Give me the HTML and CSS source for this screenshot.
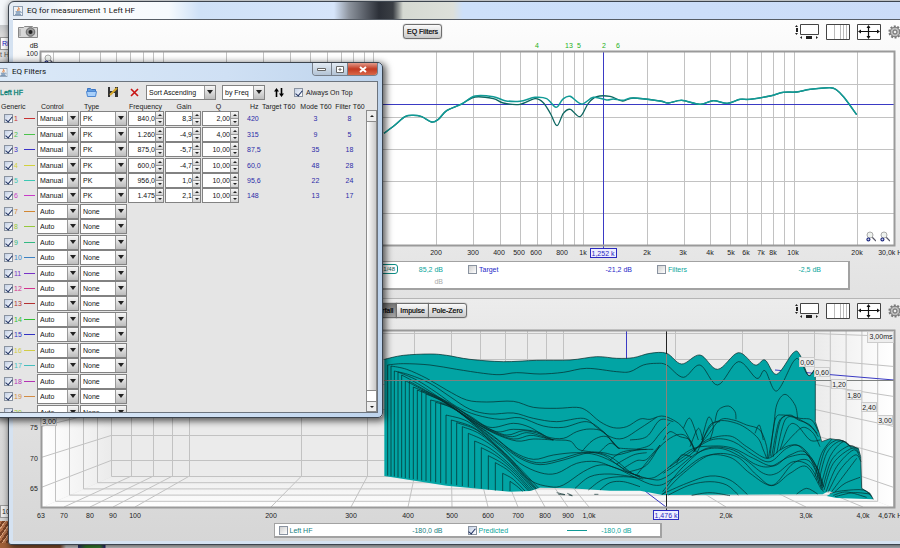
FILE: index.html
```html
<!DOCTYPE html>
<html lang="en">

<head>
    <title>EQ for measurement 1 Left HF</title>
    <meta charset="utf-8">
    <meta name="viewport" content="width=device-width, initial-scale=1.0">
    <link rel="stylesheet" href="styles.css">
</head>

<body>
    <svg class="symbols" aria-hidden="true">
        <symbol id="java" viewBox="0 0 10 10">
            <rect x=".5" y=".5" width="9" height="9" fill="#eef2f6" stroke="#8fa0b4" />
            <path d="M5 1.2C7 2.6 3.4 3.4 5 5M6.4 2.4C5.4 3.4 6.6 3.8 5.8 4.8" fill="none" stroke="#e0762b" />
            <path d="M2.5 5.8h5M3 7h4M2 8.3h6M7.6 5.6q1.4.4 0 1.4" fill="none" stroke="#4a7099" stroke-width=".8" />
        </symbol>
        <symbol id="scrollbars" viewBox="0 0 24 16">
            <path d="M5.5.5h18v10h-18z" fill="#fff" stroke="#444" />
            <path d="M0 3l1.5-2L3 3zM0 9l1.5 2L3 9zM1 4h2v4H1zM7 12v3l-2-1.5zM21 12v3l2-1.5zM11 12h6v3h-6z" fill="#222" />
        </symbol>
        <symbol id="columns" viewBox="0 0 24 16">
            <path d="M.5.5h23v15H.5z" fill="#fff" stroke="#444" />
            <path d="M8.5 1v14M14.5 1v14M17.5 1v14M20.5 1v14" stroke="#bbb" />
        </symbol>
        <symbol id="limits" viewBox="0 0 24 16">
            <path d="M.5.5h23v15H.5z" fill="#fff" stroke="#444" />
            <path d="M2 7.5h20M11.5 2v12" stroke="#111" stroke-width="1.2" />
            <path d="M1 7.5l3-2v4zM23 7.5l-3-2v4zM11.5 1l-2 3h4zM11.5 15l-2-3h4z" fill="#111" />
        </symbol>
        <symbol id="gear" viewBox="0 0 14 14">
            <circle cx="7" cy="7" r="5.6" fill="none" stroke="#777" stroke-width="2" stroke-dasharray="2 1.5" />
            <circle cx="7" cy="7" r="4.8" fill="#bbb" stroke="#777" />
            <circle cx="7" cy="7" r="2" fill="#eee" stroke="#666" />
        </symbol>
        <symbol id="lens" viewBox="0 0 10 11">
            <path d="M6 6l4 4" stroke="#556" stroke-width="1.2" />
            <circle cx="4" cy="4" r="3" fill="#eef2ee" stroke="#aaa" />
            <circle cx="2.4" cy="8.4" r="2" fill="#1b2780" />
            <path d="M1.4 8.4h2M2.4 7.4v2" stroke="#fff" stroke-width=".6" />
        </symbol>
    </svg>

    <div class="desktop">
        <span class="behind">Rig</span>
        <span class="behind lower">t H</span>
        <span class="behind bottom">10</span>
    </div>

    <main class="window eq">
        <header class="titlebar">
            <svg width="10" height="10"><use href="#java" /></svg>
            <h1>EQ for measurement 1 Left HF</h1>
        </header>

        <section class="panel">
            <div class="toolbar">
                <button class="camera" aria-label="Capture">
                    <svg width="20" height="13" viewBox="0 0 20 13">
                        <path d="M.5 2.5h5l1-1h8l1 1h4v10H.5z" fill="#d8d8d8" stroke="#888" />
                        <circle cx="12.5" cy="7" r="4.3" fill="#999" stroke="#666" />
                        <circle cx="12.5" cy="7" r="2" fill="#222" />
                        <path d="M2 4v7" stroke="#999" />
                    </svg>
                </button>
                <button class="push">EQ Filters</button>
                <span class="tools">
                    <button aria-label="Scrollbars"><svg width="24" height="16"><use href="#scrollbars" /></svg></button>
                    <button aria-label="Frequency axis"><svg width="24" height="16"><use href="#columns" /></svg></button>
                    <button aria-label="Limits"><svg width="24" height="16"><use href="#limits" /></svg></button>
                    <button aria-label="Controls"><svg width="14" height="14"><use href="#gear" /></svg></button>
                </span>
            </div>
            <svg class="chart" id="spl" viewBox="13 43 909 216">
                <rect x="40" y="51" width="855" height="195" fill="#fff" />
                <g class="grid"></g>
                <path class="cursor" d="M41 104.5H894M603.5 51V249" />
                <g class="curves"></g>
                <rect class="frame" x="40.5" y="51.5" width="854" height="194" />
                <g class="axis"></g>
                <rect class="tag" x="590.5" y="248.5" width="26" height="9" />
                <text class="tagtext" x="603" y="256">1,252 k</text>
                <use href="#lens" x="44" y="54" width="10" height="11" />
                <use href="#lens" x="866" y="231" width="10" height="11" />
                <use href="#lens" x="880" y="231" width="10" height="11" />
            </svg>
            <div class="legend wide">
                <label class="item"><input type="checkbox" checked>SPL</label>
                <div class="item green"><label><input type="checkbox" checked>Left HF</label><span class="smoothing">1/48</span><span class="value">85,2 dB</span></div>
                <div class="item blue"><label><input type="checkbox">Target</label><span class="value">-21,2 dB</span></div>
                <div class="item green"><label><input type="checkbox">Filters</label><span class="value">-2,5 dB</span></div>
                <div class="item unit"><span class="value">dB</span></div>
            </div>
        </section>

        <section class="panel lowerpanel">
            <div class="toolbar">
                <span class="tabs">
                    <button class="push selected">Waterfall</button>
                    <button class="push">Impulse</button>
                    <button class="push">Pole-Zero</button>
                </span>
                <span class="tools">
                    <button aria-label="Scrollbars"><svg width="24" height="16"><use href="#scrollbars" /></svg></button>
                    <button aria-label="Frequency axis"><svg width="24" height="16"><use href="#columns" /></svg></button>
                    <button aria-label="Limits"><svg width="24" height="16"><use href="#limits" /></svg></button>
                    <button aria-label="Controls"><svg width="14" height="14"><use href="#gear" /></svg></button>
                </span>
            </div>
            <svg class="chart" id="waterfall" viewBox="13 322 909 199">
                <defs>
                    <linearGradient id="leftwall"><stop offset="0" stop-color="#fff" /><stop offset="1" stop-color="#ebebeb" /></linearGradient>
                    <linearGradient id="rightwall"><stop offset="0" stop-color="#ebebeb" /><stop offset="1" stop-color="#fff" /></linearGradient>
                    <linearGradient id="floor" x2="0" y2="1"><stop offset="0" stop-color="#ededed" /><stop offset="1" stop-color="#fff" /></linearGradient>
                </defs>
                <path d="M111 330H815V477H111z" fill="#ebebeb" />
                <path d="M41 330H111V477L41 508z" fill="url(#leftwall)" />
                <path d="M894 330H815V477L894 508z" fill="url(#rightwall)" />
                <path d="M111 477H815L894 508H41z" fill="url(#floor)" />
                <g class="grid"></g>
                <path class="cursor" d="M626.5 331V370M645 491L666 507M775 370L894 380" />
                <g class="slices"></g>
                <path class="crosshair" d="M384 380.5H894" />
                <path d="M666.5 331V510" stroke="#222" />
                <path d="M666.5 354V494" stroke="#8b8178" />
                <rect class="frame" x="41.5" y="330.5" width="853" height="177" />
                <g class="axis"></g>
                <rect class="tag" x="653.5" y="510.5" width="25" height="9" />
                <text class="tagtext" x="666" y="518">1,476 k</text>
            </svg>
            <div class="legend narrow">
                <div class="item teal"><label><input type="checkbox">Left HF</label><span class="value">-180,0 dB</span></div>
                <div class="item green"><label><input type="checkbox" checked>Predicted</label><span class="line"></span><span class="value">-180,0 dB</span></div>
            </div>
        </section>
    </main>

    <section class="window filters">
        <header class="titlebar">
            <svg width="8" height="9" viewBox="2 0 8 10"><use href="#java" width="10" height="10" /></svg>
            <h2>EQ Filters</h2>
            <span class="winbuttons">
                <button aria-label="Minimize"><svg width="10" height="5"><path d="M.5 1.5h8v2h-8z" fill="#fff" stroke="#666" /></svg></button>
                <button aria-label="Maximize"><svg width="8" height="7"><path d="M.5 .5h7v6h-7zM3 3h2v1H3z" fill="#fff" stroke="#666" /></svg></button>
                <button class="close" aria-label="Close"><svg width="8" height="7"><path d="M1 1l6 5M7 1L1 6" stroke="#fff" stroke-width="2" /></svg></button>
            </span>
        </header>
        <div class="content">
            <div class="filterbar">
                <strong>Left HF</strong>
                <button aria-label="Open filters"><svg width="12" height="10" viewBox="0 0 12 10"><path d="M1.5 8V1.5h3l1 1h4V8z" fill="#5f9be0" stroke="#3c76c4" /><path d="M.5 4.5h10l-1 5h-8z" fill="#a9d0fa" stroke="#4d87d2" /></svg></button>
                <button aria-label="Save filters"><svg width="10" height="10" viewBox="0 0 10 10"><path d="M0 0h10v10H0z" fill="#333" /><path d="M2 0h5v4H2zM2 6h5v4H2z" fill="#ddd" /><path d="M2 8L9 1" stroke="#d6a92c" stroke-width="2" /></svg></button>
                <button aria-label="Delete filters"><svg width="9" height="9" viewBox="0 0 9 9"><path d="M1 1l7 7M8 1L1 8" stroke="#c81414" stroke-width="1.6" /></svg></button>
                <span class="combo sort"><select aria-label="Sort order"><option>Sort Ascending</option><option>Sort Descending</option></select></span>
                <span class="combo by"><select aria-label="Sort by"><option>by Freq</option><option>by Gain</option></select></span>
                <button aria-label="Sort"><svg width="10" height="9" viewBox="0 0 10 9"><path d="M2.5 2v7M7.5 0v7" stroke="#000" stroke-width="1.6" /><path d="M0 3.4L2.5 0 5 3.4zM5 5.6L7.5 9 10 5.6z" /></svg></button>
                <label><input type="checkbox" checked>Always On Top</label>
            </div>
            <div class="scrollpane">
                <table>
                    <thead>
                        <tr>
                            <th class="generic">Generic</th>
                            <th class="control">Control</th>
                            <th class="type">Type</th>
                            <th class="freq">Frequency</th>
                            <th class="gain mid">Gain</th>
                            <th class="q mid">Q</th>
                            <th class="hz">Hz</th>
                            <th class="target">Target T60</th>
                            <th class="mode mid">Mode T60</th>
                            <th class="filter mid">Filter T60</th>
                        </tr>
                    </thead>
                    <tbody id="rows"></tbody>
                </table>
                <div class="scrollbar">
                    <button class="up" aria-label="Scroll up"></button>
                    <span class="thumb"></span>
                    <button class="down" aria-label="Scroll down"></button>
                </div>
            </div>
        </div>
    </section>

    <template id="row">
        <tr>
            <td><label class="number"><input type="checkbox" checked><span class="nr"></span><i class="dash"></i></label></td>
            <td><span class="combo"><select class="c" aria-label="Control"><option>Manual</option><option>Auto</option></select></span></td>
            <td><span class="combo"><select class="t" aria-label="Type"><option>PK</option><option>None</option></select></span></td>
        </tr>
    </template>

    <script src="script.js"></script>
</body>

</html>
```

FILE: styles.css
```css
* {
    box-sizing: border-box;
}

body {
    margin: 0;
    height: 100vh;
    overflow: hidden;
    position: relative;
    background: #dcdcdc;
    font-family: "Liberation Sans", Arial, sans-serif;
    font-size: 7px;
    line-height: 9px;
    color: #222;
}

button,
input,
select {
    font: inherit;
    color: inherit;
    margin: 0;
    padding: 0;
}

button {
    background: none;
    border: 0;
    display: flex;
    align-items: center;
    justify-content: center;
}

h1,
h2 {
    margin: 0;
    font: 8px/12px Roboto, "Noto Sans", sans-serif;
    color: #111;
}

.symbols {
    position: absolute;
    width: 0;
    height: 0;
}

input[type=checkbox] {
    appearance: none;
    flex: none;
    width: 9px;
    height: 9px;
    border: 1px solid #8a93a0;
    background: linear-gradient(135deg, #cfcfcf, #fff);
    display: grid;
    place-items: center;
}

input[type=checkbox]:checked {
    background: linear-gradient(135deg, #c3d0e6, #fff);
}

input[type=checkbox]:checked::after {
    content: "";
    width: 3px;
    height: 6px;
    border: solid #1d2f60;
    border-width: 0 1px 1px 0;
    transform: rotate(40deg);
}

label {
    display: flex;
    align-items: center;
    gap: 2px;
}

/* what can be seen of the windows behind */
.desktop {
    position: absolute;
    inset: 0;
    background:
        linear-gradient(90deg, transparent 78px, #3a3a8a 78px, #3f9a35 86px, #4aa344 100px, #3a2f90 105px, transparent 106px) 0 100% / 100% 5px no-repeat,
        linear-gradient(90deg, #a06038 60px, #fff 66px, #e8f1fa) 0 100% / 100% 5px no-repeat,
        repeating-linear-gradient(125deg, #b4714a 0 2px, #7d4426 2px 4px, #d9a27c 4px 5px) 0 100% / 9px 27px no-repeat,
        linear-gradient(#f4f7fa 25px, #c6c9cc 25px, #d9d9d9 34px, #e2e2e2 60px, #d6d6d6);
}

.behind {
    position: absolute;
    left: 0;
    top: 37px;
    padding: 1px 0 1px 1px;
    background: #fff;
    border: 1px solid #999;
    border-right: 0;
    color: #1515c8;
}

.lower {
    top: 49px;
    padding-left: 0;
    border: 0;
    background: none;
    color: #555;
}

.bottom {
    top: 505px;
    background: #eee;
    color: #222;
}

.window {
    position: absolute;
    border: 1px solid #3c444e;
    box-shadow: 2px 2px 7px 1px rgba(0, 0, 0, .65);
}

.titlebar {
    display: flex;
    align-items: center;
}

.eq {
    left: 8px;
    right: -27px;
    top: 1px;
    bottom: 3px;
    border-radius: 6px 6px 3px 3px;
    padding: 0 4px 3px;
    background:
        linear-gradient(90deg, #e6edf5 30px, #fbfcfd 60px, #f6fafd 160px, #cfe1f7 190px, #d6e5fa 325px, #30343c 334px, #2c3038 386px, #bfc5c0 392px, #dde0da 446px, #cde0fa 452px, #cbdcf8) 0 0 / 100% 18px no-repeat,
        #d5e2f1;
    background:
        linear-gradient(90deg, #e6edf5 30px, #fbfcfd 60px, #f6fafd 160px, #cfe1f7 190px, #d6e5fa 325px, #8d949e 340px, #2c3038 370px, #3a3e44 384px, #d5d9d2 394px, #dde0da 444px, #cde0fa 454px, #cbdcf8) 0 0 / 100% 18px no-repeat,
        #d5e2f1;
}

.eq .titlebar {
    height: 17px;
    gap: 4px;
}

.panel {
    border-top: 1px solid #565d66;
    background: linear-gradient(#fdfdfd, #f7f7f7 20%, #e2e2e2);
    padding-bottom: 8px;
}

.lowerpanel {
    border-top-color: #b5b5b5;
    background: linear-gradient(#ececec, #e6e6e6 20%, #d6d6d6);
    padding-bottom: 3px;
}

.toolbar {
    display: flex;
    align-items: center;
    height: 23px;
    padding: 0 20px 0 5px;
}

.camera {
    width: 20px;
    margin-right: 365px;
}

.push {
    height: 15px;
    padding: 0 3px;
    border: 1px solid #6e6e6e;
    border-radius: 3px;
    background: linear-gradient(#fafafa, #c9c9c9);
    box-shadow: 0 0 1px #555;
    -webkit-text-stroke: .2px;
    color: #000;
}

.tabs {
    display: flex;
    margin-left: 345px;
}

.tabs .push {
    border-radius: 0;
    margin-left: -1px;
}

.tabs .push:last-child {
    border-radius: 0 3px 3px 0;
}

.tabs .selected {
    background: linear-gradient(#777, #a5a5a5);
}

.tools {
    display: flex;
    align-items: center;
    gap: 7px;
    margin-left: auto;
}

/* charts */
.chart {
    display: block;
    width: 100%;
    height: auto;
}

.chart text {
    font-size: 7px;
    fill: #222;
    text-anchor: middle;
}

.grid path {
    stroke: #c2c2c2;
    fill: none;
}

.frame {
    fill: none;
    stroke: #9a9a9a;
    stroke-width: 2;
}

.cursor {
    fill: none;
    stroke: #3a3ac4;
}

.crosshair {
    stroke: #7d807f;
    stroke-width: 1;
}

.chart .filternr {
    fill: #1fb022;
}

.tag {
    fill: #eef;
    stroke: #2a2ac0;
}

.chart .tagtext {
    fill: #2a2ac0;
}

.label {
    fill: #eee;
    stroke: #ccc;
}

.predicted {
    fill: none;
    stroke: #109a96;
    stroke-width: 1.5;
}

.measured {
    fill: none;
    stroke: #0c6660;
    stroke-width: 1.3;
}

.body {
    fill: #02a4a4;
}

.slice {
    fill: none;
    stroke: #062a2a;
    stroke-width: .7;
}

.legend {
    display: grid;
    margin: 2px auto 0;
    padding: 2px 4px;
    background: #fff;
    border: 2px solid #a2a2a2;
    border-width: 1px 2px 2px 1px;
}

.wide {
    width: 765px;
    height: 29px;
    grid-template-columns: repeat(4, 189px);
    grid-template-rows: 10px 14px;
}

.narrow {
    width: 388px;
    height: 15px;
    padding: 1px 4px;
    grid-template-columns: repeat(2, 189px);
}

.item {
    display: flex;
    align-items: center;
    padding-right: 25px;
}

.item label {
    flex: 1;
}

.value {
    width: 45px;
    text-align: right;
}

.unit {
    grid-column: 2;
    justify-content: flex-end;
    color: #aaa;
}

.blue {
    color: #2626c8;
}

.green {
    color: #0ba59b;
}

.teal {
    color: #168080;
}

.smoothing {
    padding: 0 2px;
    border: 1px solid #0c8c84;
    border-radius: 3px;
    font-size: 6px;
    line-height: 8px;
    color: #0c5c58;
}

.line {
    width: 20px;
    margin-right: -12px;
    border-top: 1px solid #109a96;
}

.line + .value {
    margin-left: 12px;
}

/* filter dialog */
.filters {
    left: -6px;
    top: 62px;
    width: 389px;
    border-radius: 5px;
    padding: 0 4px 4px 5px;
    background: linear-gradient(90deg, #dbe9f8, #cfe0f4 60%, #bdd3ec);
}

.filters .titlebar {
    height: 18px;
    gap: 4px;
}

.winbuttons {
    display: flex;
    align-self: flex-start;
    margin-left: auto;
    height: 13px;
    border: 1px solid #777f8a;
    border-top: 0;
    border-radius: 0 0 4px 4px;
    overflow: hidden;
}

.winbuttons button {
    width: 19px;
    border-right: 1px solid #777f8a;
    background: linear-gradient(#e3ebf4, #b3c3d5);
}

.winbuttons button:nth-child(2) {
    width: 16px;
}

.winbuttons .close {
    width: 29px;
    border: 0;
    background: linear-gradient(#e39a8a, #c23a22 50%, #d9684a);
}

.content {
    border: 1px solid #6c747e;
    border-left: 0;
    background: #e5e5e5;
}

.filterbar {
    display: flex;
    align-items: center;
    height: 19px;
    padding-top: 1px;
}

.filterbar strong {
    width: 86px;
    color: #0a8276;
    font-weight: normal;
    -webkit-text-stroke: .3px;
}

.filterbar button {
    width: 12px;
    margin-right: 9px;
}

.filterbar label {
    gap: 3px;
}

.combo {
    position: relative;
    display: block;
    height: 15px;
    border: 1px solid #828282;
    background: #fff;
}

.combo select {
    appearance: none;
    display: block;
    width: 100%;
    height: 13px;
    padding: 0 2px;
    border: 0;
    background: none;
    color: #111;
}

.combo::before {
    content: "";
    position: absolute;
    right: 0;
    top: 0;
    bottom: 0;
    width: 10px;
    border-left: 1px solid #999;
    background: linear-gradient(#f6f6f6, #bdbdbd);
    pointer-events: none;
}

.combo::after {
    content: "";
    position: absolute;
    right: 2px;
    top: 4px;
    border: 3px solid transparent;
    border-top: 4px solid #222;
    border-bottom: 0;
    pointer-events: none;
}

.filterbar .sort {
    width: 70px;
    margin: 0 6px 0 -3px;
}

.by {
    width: 43px;
    margin-right: 8px;
}

.scrollpane {
    display: flex;
    height: 311px;
    overflow: hidden;
}

table {
    width: 366px;
    height: 319px;
    table-layout: fixed;
    border-collapse: collapse;
}

th {
    height: 10px;
    padding: 0 0 0 1px;
    font-weight: normal;
    text-align: left;
    white-space: nowrap;
}

td {
    padding: 0;
    color: #2b2ba8;
}

th.generic { width: 37px; }
th.control { width: 43px; padding-left: 4px; }
th.type { width: 48px; padding-left: 4px; }
th.freq { width: 37px; }
th.gain { width: 37px; }
th.q { width: 38px; padding-right: 6px; }
th.hz { width: 21px; padding-left: 10px; }
th.target { width: 37px; }
th.mode { width: 35px; }
th.filter { width: 33px; }

.mid {
    text-align: center;
}

.hzvalue {
    padding-left: 7px;
}

.number {
    padding-left: 4px;
    gap: 1px;
}

.nr {
    width: 9px;
}

.dash {
    width: 11px;
    height: 1px;
    background: currentColor;
}

td .combo {
    margin-right: 1px;
}

.spinner {
    display: grid;
    grid-template-columns: 1fr 8px;
    grid-template-rows: 6px 7px;
    height: 15px;
    margin-right: 1px;
    border: 1px solid #828282;
    background: #fff;
}

.spinner input {
    grid-row: 1 / 3;
    width: 100%;
    height: 13px;
    border: 0;
    background: none;
    text-align: right;
    color: #111;
}

.spinner button {
    border-left: 1px solid #999;
    background: linear-gradient(#f8f8f8, #d0d0d0);
}

.spinner button + button {
    border-top: 1px solid #999;
}

.spinner button::after,
.scrollbar button::after {
    content: "";
    border: 2px solid transparent;
    border-bottom-color: #222;
    border-top: 0;
}

.spinner button + button::after,
.scrollbar .down::after {
    border-top: 2px solid #222;
    border-bottom: 0;
}

.scrollbar {
    display: flex;
    flex-direction: column;
    width: 11px;
    margin-top: 9px;
    border: 1px solid #8b8b8b;
    background: #fff;
}

.scrollbar button {
    height: 10px;
    background: #eee;
}

.thumb {
    flex: 1;
    margin-bottom: 10px;
    border: solid #8b8b8b;
    border-width: 1px 0;
    background: linear-gradient(90deg, #fff, #c9c9c9);
}

.scrollbar .down {
    border-top: 1px solid #8b8b8b;
}
```

FILE: script.js
```js
const filters = [
    ["#c83232", "840,0", "8,3", "2,00", "420", "3", "8"],
    ["#4cc34c", "1.260", "-4,9", "4,00", "315", "9", "5"],
    ["#3c32c8", "875,0", "-5,7", "10,00", "87,5", "35", "18"],
    ["#d2d23c", "600,0", "-4,7", "10,00", "60,0", "48", "28"],
    ["#3cc8b4", "956,0", "1,0", "10,00", "95,6", "22", "24"],
    ["#c83cc8", "1.475", "2,1", "10,00", "148", "13", "17"],
    ["#d28732"], ["#96c83c"], ["#32b982"], ["#3c82c3"], ["#7832c8"], ["#d2328c"], ["#b43232"],
    ["#32be32"], ["#3232c3"], ["#d2cd46"], ["#46bebe"], ["#b432b4"], ["#d28c46"], ["#96c83c"]
];

const rows = document.querySelector("#rows");
const template = document.querySelector("#row").content;

filters.forEach(([color, ...values], i) => {
    const klon = template.cloneNode(true);
    const tr = klon.querySelector("tr");
    klon.querySelector(".nr").textContent = i + 1;
    klon.querySelector(".nr").style.color = color;
    klon.querySelector(".dash").style.color = color;
    if (values.length == 0) {
        klon.querySelector(".c").value = "Auto";
        klon.querySelector(".t").value = "None";
        tr.insertAdjacentHTML("beforeend", '<td colspan="7"></td>');
    } else {
        ["Frequency", "Gain", "Q"].forEach((name, n) => {
            tr.insertAdjacentHTML("beforeend", `<td><span class="spinner"><input type="text" aria-label="${name}" value="${values[n]}"><button aria-label="${name} up"></button><button aria-label="${name} down"></button></span></td>`);
        });
        tr.insertAdjacentHTML("beforeend", `<td class="hzvalue">${values[3]}</td><td></td><td class="mid">${values[4]}</td><td class="mid">${values[5]}</td>`);
    }
    rows.appendChild(klon);
});

function draw(parent, name, attributes, text) {
    const el = document.createElementNS("http://www.w3.org/2000/svg", name);
    for (const key in attributes) el.setAttribute(key, attributes[key]);
    if (text) el.textContent = text;
    document.querySelector(parent).appendChild(el);
}

// "x,y x,y ..." in thirds of a unit from the origin -> points
function points(list, ox, oy) {
    return list.split(" ").map(p => p.split(",")).map(p => [ox + p[0] / 3, oy + p[1] / 3]);
}

// smooth line through all points
function smooth(p) {
    let d = `M${p[0]}`;
    for (let i = 0; i < p.length - 1; i++) {
        const a = p[i - 1] || p[i], b = p[i], c = p[i + 1], e = p[i + 2] || c;
        d += `C${b[0] + (c[0] - a[0]) / 6} ${b[1] + (c[1] - a[1]) / 6} ${c[0] - (e[0] - b[0]) / 6} ${c[1] - (e[1] - b[1]) / 6} ${c}`;
    }
    return d;
}

// SPL chart
let lines = "";
for (let decade = 1; decade <= 10000; decade *= 10) {
    for (let n = 1; n < 10; n++) {
        const x = Math.round(163 + 210.2 * Math.log10(n * decade / 10)) + .5;
        if (x > 41 && x < 893) lines += `M${x} 52V245`;
    }
}
[84, 117, 149, 181, 213].forEach(y => lines += `M41 ${y}.5H894`);
draw("#spl .grid", "path", { d: lines });

const common = "12,400 45,375 75,350 100,346 125,350 155,366 175,358 200,332 245,312 ";
const high = " 760,294 840,303 865,309 905,301 960,313 1000,302 1042,310 1080,298 1110,298 1170,288 1210,277 1250,276 1290,268 1350,263 1370,270 1392,292 1430,344";
draw("#spl .curves", "path", { class: "measured", d: smooth(points(common + "285,291 340,296 370,309 420,313 465,296 490,308 512,342 531,377 550,340 571,328 600,350 625,310 650,290 690,289 728,303" + high, 380, 0)) });
draw("#spl .curves", "path", { class: "predicted", d: smooth(points(common + "285,288 340,290 375,302 420,304 465,292 500,296 528,322 548,298 570,289 605,312 640,292 680,300 700,297 728,301" + high, 380, 0)) });

[["200", 436], ["300", 473], ["400", 499], ["500", 519], ["600", 536], ["800", 562], ["1k", 583], ["2k", 647], ["3k", 683], ["4k", 710], ["5k", 731], ["6k", 746], ["7k", 761], ["8k", 773], ["10k", 793], ["20k", 857], ["30,0k Hz", 892]]
    .forEach(([t, x]) => draw("#spl .axis", "text", { x: x, y: 255 }, t));
[["4", 537], ["1", 567], ["3", 571], ["5", 579], ["2", 604], ["6", 618]]
    .forEach(([t, x]) => draw("#spl .axis", "text", { x: x, y: 48, class: "filternr" }, t));
draw("#spl .axis", "text", { x: 34, y: 48 }, "dB");
draw("#spl .axis", "text", { x: 32, y: 56 }, "100");

// waterfall box
lines = "";
for (let i = 0; i < 6; i++) {
    const y = 507.5 - i * 6.2;
    lines += `M${41.5 + i * 14} 331V${y}H${893.5 - i * 15.8}V331`;
}
[[333, 336], [359, 366], [384, 396], [409, 426], [435, 457], [460, 487]]
    .forEach(([back, front]) => lines += `M41 ${front}.5L111 ${back}.5H815L894 ${front}.5`);
[[131, 64], [153, 90], [172, 113], [189, 135], [301, 271], [367, 351], [414, 408], [451, 452], [480, 488], [505, 518], [527, 545], [546, 568], [563, 589], [675, 726], [742, 806], [788, 863]]
    .forEach(([back, front]) => lines += `M${back}.5 331V476L${front} 507`);
draw("#waterfall .grid", "path", { d: lines });

// all slices share one grid, origin 370,340
const ridge = smooth(points("43,58 100,46 180,42 230,46 300,58 400,65 500,61 600,60 680,50 740,55 790,53 840,40 890,40 935,72 990,45 1043,88 1105,38 1155,75 1185,60 1220,103 1270,38 1290,45 1315,106 1336,85", 370, 340));
const skirt = points("1336,245 1348,280 1355,305 1380,296 1420,302 1440,318 1465,325 1472,350 1475,445 1500,460 1510,478 1400,474 1370,468 1390,457 1375,454 1358,463 878,465 810,452 720,452 600,445 510,443 480,453 420,455 230,437 43,408", 370, 340);
draw("#waterfall .slices", "path", { class: "body", d: ridge + "L" + skirt.join("L") + "z" });
draw("#waterfall .slices", "path", { class: "slice", d: ridge + "L" + skirt.slice(0, 11).join("L") });

const slices = [
    "53,75 100,71 180,75 260,88 340,100 390,104 440,98 510,102 580,97 650,85 740,95 780,95 820,75 860,70 890,75 940,112 990,75 1043,135 1105,65 1160,115 1185,92 1220,153 1270,65 1290,62 1315,106 1336,85",
    "63,78 110,88 170,115 230,150 290,180 350,186 430,184 490,202 560,205 620,202 650,212 690,245 730,263 770,260 810,237 840,238 875,228 910,240 940,265 970,320 980,335",
    "73,93 120,105 180,130 240,170 300,208 360,222 430,219 490,235 560,245 640,235 680,262 720,290 760,295 810,265 860,232",
    "84,96 140,120 200,158 260,200 320,225 390,238 450,233 520,258 580,262 650,245 700,275 740,320 755,325 810,328",
    "95,105 150,135 220,180 300,228 360,262 430,250 480,262 530,290 580,295 620,275 660,267 700,275 730,310 750,326",
    "106,122 160,150 240,190 320,245 380,275 430,268 500,275 545,298 600,303 630,330 700,338 740,345 800,330 850,328",
    "118,124 200,170 280,218 350,262 410,285 460,272 510,282 530,297",
    "130,141 200,172 280,222 350,266 420,290 470,278 520,290 550,300",
    "142,150 210,180 290,230 360,272 430,297 480,286 520,293 550,300",
    "155,152 220,184 300,238 370,279 440,303 490,297 550,300",
    "168,162 230,190 300,240 370,288 430,335 490,358 550,345 620,338 680,345 740,372 770,395 810,408",
    "182,180 240,198 310,248 380,298 440,345 500,368 560,360 640,338 700,345 750,380 810,412",
    "197,187 250,205 320,258 390,312 450,355 510,374 580,360 660,338 720,350 790,402 840,415 880,395 960,330 1030,318 1090,325 1150,355 1210,378 1260,345 1310,340 1360,440",
    "212,190 260,212 330,268 400,325 450,370 510,398 560,400 620,370 680,365 740,385 840,417 890,410 980,340 1050,325 1120,355 1180,400 1220,400 1270,365 1320,380 1360,455",
    "228,225 290,243 350,288 420,355 480,420 540,440 580,435 640,395 690,375 740,385 850,435 910,415 1000,350 1080,352 1140,400 1205,437 1260,400 1310,380 1355,450",
    "244,240 310,262 370,310 440,375 505,444",
    "260,248 320,270 380,320 440,380 500,446",
    "277,260 330,282 390,332 450,395 498,447",
    "295,280 350,306 410,355 460,410 495,448",
    "314,303 360,325 410,365 460,415 490,450",
    "334,323 380,348 430,390 485,451",
    "355,347 400,372 440,407 480,452",
    "376,368 410,388 440,415 475,452",
    "398,400 430,418 465,453",
    "420,424 440,438 458,454",
    "615,445 660,410 720,402 800,412", "655,450 700,418 760,410 820,417", "690,450 720,428 760,425 810,440",
    "635,335 670,300 710,290 745,325", "685,340 720,310 745,325", "720,360 760,335 830,328", "740,372 790,345 830,338",
    "760,385 800,362 830,358 870,315", "780,300 830,290 870,240 910,245", "800,328 840,315 870,280 900,248",
    "800,405 840,355 880,310 920,285 950,290 975,335", "940,265 960,235 985,300", "995,300 1015,232 1030,260 1020,300",
    "970,335 1010,290 1050,240 1090,240 1130,255 1170,270 1190,320 1192,355", "1035,245 1045,210 1075,198 1095,215 1098,238",
    "980,340 1030,250 1100,250 1160,290 1180,330 1190,355", "1155,280 1168,255 1180,300", "990,320 1020,255 1050,245", "960,320 985,265 1000,305",
    "880,300 900,275 930,290 960,300 975,335", "780,395 830,375 870,315", "920,370 935,345 965,350",
    "880,400 960,345 1010,300 1080,288 1130,320 1190,355 1230,330 1265,315 1300,325 1340,380 1360,440",
    "900,380 970,330 1030,298 1090,305 1150,345 1200,365 1250,325 1290,320 1345,390",
    "878,463 940,400 1020,345 1100,350 1160,405 1210,435 1270,370 1320,365 1358,445",
    "878,455 940,380 1010,325 1090,330 1150,370 1200,380 1260,350 1320,350 1358,430",
    "875,463 950,430 1020,408 1080,420 1132,463", "895,465 960,435 1020,425 1070,435 1105,465", "965,466 1020,458 1080,467", "1280,462 1310,445 1343,462",
    "1195,355 1210,270 1220,195 1245,163 1275,195 1283,235", "1200,350 1215,240 1240,225 1290,235 1325,240 1345,275",
    "1205,350 1225,250 1245,228", "1210,350 1230,245 1260,225 1285,240 1320,255 1345,290", "1220,340 1245,240 1280,235 1320,258 1342,280",
    "1230,330 1255,260 1280,255 1320,300 1350,300", "1235,325 1270,285 1300,262 1330,280 1350,320",
    "1335,410 1355,340 1385,298", "1340,420 1365,330 1400,300 1420,305", "1345,430 1370,340 1410,303 1440,318", "1352,440 1380,350 1420,305 1445,325",
    "1358,445 1385,360 1435,318 1465,328", "1362,450 1390,370 1445,325 1468,340", "1368,455 1400,380 1450,330 1470,352", "1375,455 1410,390 1455,345 1473,365",
    "1385,455 1430,395 1460,355", "1395,455 1425,430 1470,412", "1380,460 1420,452 1480,450 1505,470", "1395,470 1450,458 1500,462", "1390,466 1430,456 1490,472",
    "560,458 585,464 565,463", "592,460 607,467 596,465", "673,463 685,463"
];
slices.forEach((s, i) => {
    const p = points(s, 370, 340);
    let d = smooth(p);
    // the first ones also show their left edge, down to the floor
    if (i < 25) d = `M${p[0][0]} ${Math.min(475 + (p[0][0] - 384) * .14, 491)}L${p[0]}` + d.replace("M", "L");
    draw("#waterfall .slices", "path", { class: "slice", d: d });
});

[["63", 41], ["70", 64], ["80", 90], ["90", 113], ["100", 135], ["200", 271], ["300", 351], ["400", 408], ["500", 452], ["600", 488], ["700", 518], ["800", 545], ["900", 568], ["1,0k", 589], ["2,0k", 726], ["3,0k", 806], ["4,0k", 863], ["4,67k Hz", 892]]
    .forEach(([t, x]) => draw("#waterfall .axis", "text", { x: x, y: 518 }, t));
[["75", 427], ["70", 458], ["65", 488]].forEach(([t, y]) => draw("#waterfall .axis", "text", { x: 34, y: y + 3 }, t));
[["0,00", 807, 362], ["0,60", 822, 372], ["1,20", 839, 384], ["1,80", 854, 395], ["2,40", 869, 407], ["3,00", 885, 420], ["3,00", 49, 421]]
    .forEach(([t, x, y]) => {
        draw("#waterfall .axis", "rect", { class: "label", x: x - 7.5, y: y - 4.5, width: 15, height: 9 });
        draw("#waterfall .axis", "text", { x: x, y: y + 3 }, t);
    });
draw("#waterfall .axis", "rect", { class: "label", x: 867.5, y: 331.5, width: 26, height: 11 });
draw("#waterfall .axis", "text", { x: 881, y: 339 }, "3,00ms");
```
